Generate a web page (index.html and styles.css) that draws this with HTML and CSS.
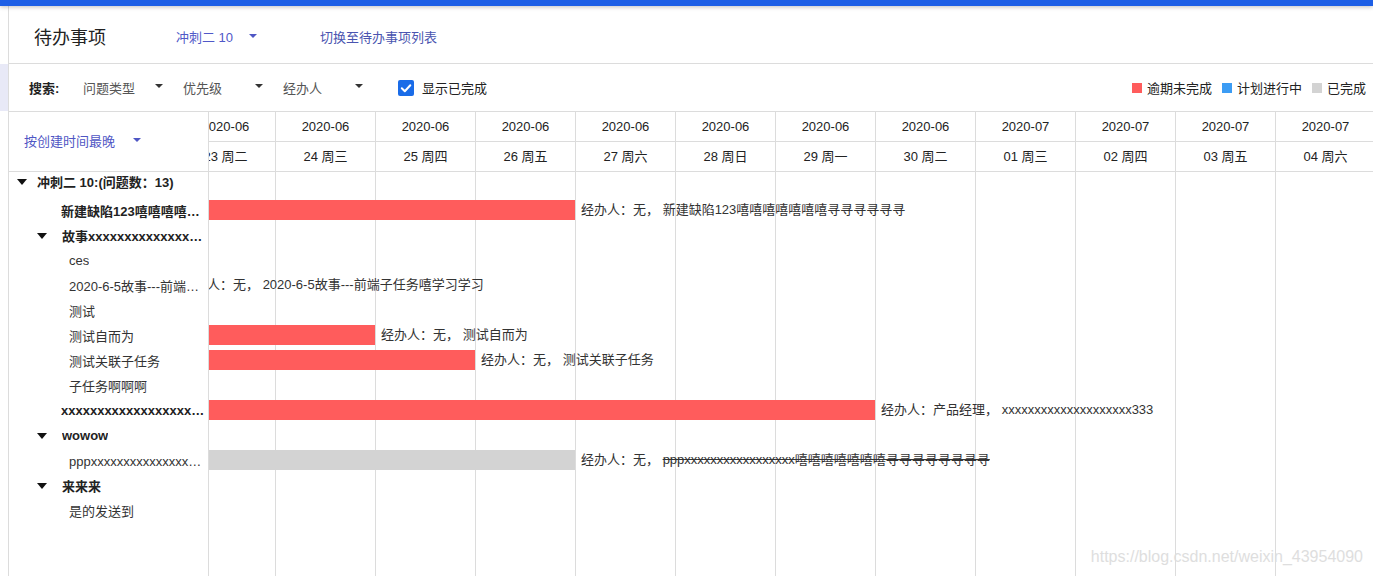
FILE: index.html
```html
<!DOCTYPE html>
<html lang="zh-CN">
<head>
<meta charset="utf-8">
<title>待办事项</title>
<link rel="stylesheet" href="styles.css">
</head>
<body>
<div class="topbar"></div>
<div class="page">
  <aside class="rail"><div class="rail-top"></div><div class="rail-mid"></div></aside>
  <main class="main">
    <header class="head">
      <h1 class="title">待办事项</h1>
      <div class="sprint"><span>冲刺二 10</span><span class="caret caret-blue"></span></div>
      <a class="switch">切换至待办事项列表</a>
    </header>
    <div class="search">
      <span class="search-label">搜索:</span>
      <div class="filter"><span class="ftxt">问题类型</span><span class="caret"></span></div>
      <div class="filter"><span class="ftxt">优先级</span><span class="caret"></span></div>
      <div class="filter"><span class="ftxt">经办人</span><span class="caret"></span></div>
      <label class="check"><span class="box"><svg width="16" height="16" viewBox="0 0 16 16"><path d="M3.8 8.3 L6.8 11.2 L12.3 5.2" fill="none" stroke="#fff" stroke-width="2" stroke-linecap="round" stroke-linejoin="round"/></svg></span>显示已完成</label>
      <div class="legend">
        <i class="sw red"></i><span>逾期未完成</span>
        <i class="sw blue"></i><span>计划进行中</span>
        <i class="sw gray"></i><span>已完成</span>
      </div>
    </div>
    <div class="gantt">
      <div class="tree">
        <div class="tree-head"><span>按创建时间最晚</span><span class="caret caret-blue sortcaret"></span></div>
        <div class="trow g lv0"><span class="tcaret"></span><span class="name b">冲刺二 10:(问题数：13)</span></div>
        <div class="trow lv1 leaf"><span class="name b">新建缺陷123嘻嘻嘻嘻嘻嘻嘻寻寻寻寻寻寻</span></div>
        <div class="trow lv1"><span class="tcaret"></span><span class="name b">故事xxxxxxxxxxxxxxxxxxxxxxxxxxxx</span></div>
        <div class="trow lv2"><span class="name">ces</span></div>
        <div class="trow lv2"><span class="name">2020-6-5故事---前端子任务嘻学习学习</span></div>
        <div class="trow lv2"><span class="name">测试</span></div>
        <div class="trow lv2"><span class="name">测试自而为</span></div>
        <div class="trow lv2"><span class="name">测试关联子任务</span></div>
        <div class="trow lv2"><span class="name">子任务啊啊啊</span></div>
        <div class="trow lv1 leaf"><span class="name b">xxxxxxxxxxxxxxxxxxxx333</span></div>
        <div class="trow lv1"><span class="tcaret"></span><span class="name b">wowow</span></div>
        <div class="trow lv2"><span class="name">pppxxxxxxxxxxxxxxxxx嘻嘻嘻嘻嘻嘻嘻寻寻寻寻寻寻寻寻</span></div>
        <div class="trow lv1"><span class="tcaret"></span><span class="name b">来来来</span></div>
        <div class="trow lv2"><span class="name">是的发送到</span></div>
      </div>
      <div class="chart">
        <div class="chart-inner">
          <div class="hrow">
            <div class="hcell">2020-06</div><div class="hcell">2020-06</div><div class="hcell">2020-06</div><div class="hcell">2020-06</div>
            <div class="hcell">2020-06</div><div class="hcell">2020-06</div><div class="hcell">2020-06</div><div class="hcell">2020-06</div>
            <div class="hcell">2020-07</div><div class="hcell">2020-07</div><div class="hcell">2020-07</div><div class="hcell">2020-07</div>
          </div>
          <div class="hrow">
            <div class="hcell">23 周二</div><div class="hcell">24 周三</div><div class="hcell">25 周四</div><div class="hcell">26 周五</div>
            <div class="hcell">27 周六</div><div class="hcell">28 周日</div><div class="hcell">29 周一</div><div class="hcell">30 周二</div>
            <div class="hcell">01 周三</div><div class="hcell">02 周四</div><div class="hcell">03 周五</div><div class="hcell">04 周六</div>
          </div>
          <div class="cbody">
            <div class="crow g"></div>
            <div class="crow"><div class="bar red" style="width:400px"></div><span class="lbl">经办人：无， <span>新建缺陷123嘻嘻嘻嘻嘻嘻嘻寻寻寻寻寻寻</span></span></div>
            <div class="crow"></div>
            <div class="crow"></div>
            <div class="crow"><div class="bar red" style="width:0px"></div><span class="lbl">经办人：无， <span>2020-6-5故事---前端子任务嘻学习学习</span></span></div>
            <div class="crow"></div>
            <div class="crow"><div class="bar red" style="width:200px"></div><span class="lbl">经办人：无， <span>测试自而为</span></span></div>
            <div class="crow"><div class="bar red" style="width:300px"></div><span class="lbl">经办人：无， <span>测试关联子任务</span></span></div>
            <div class="crow"></div>
            <div class="crow"><div class="bar red" style="width:700px"></div><span class="lbl">经办人：产品经理， <span>xxxxxxxxxxxxxxxxxxxx333</span></span></div>
            <div class="crow"></div>
            <div class="crow"><div class="bar gray" style="width:400px"></div><span class="lbl">经办人：无， <span class="done">pppxxxxxxxxxxxxxxxxx嘻嘻嘻嘻嘻嘻嘻寻寻寻寻寻寻寻寻</span></span></div>
            <div class="crow"></div>
            <div class="crow"></div>
          </div>
        </div>
      </div>
    </div>
  </main>
</div>
<div class="wm">https://blog.csdn.net/weixin_43954090</div>
</body>
</html>
```

FILE: styles.css
```css
* { box-sizing: border-box; margin: 0; padding: 0; }
html, body { height: 100%; }
body {
  font-family: "Liberation Sans", "Noto Sans CJK SC", sans-serif;
  font-size: 13px;
  color: #333;
  background: #fff;
  overflow: hidden;
  display: flex;
  flex-direction: column;
}
.topbar {
  height: 6px;
  flex: none;
  background: #1d5fe6;
  box-shadow: 0 1px 4px rgba(0, 0, 0, 0.25);
  position: relative;
  z-index: 2;
}
.page { flex: 1; display: flex; min-height: 0; }
.rail { width: 8px; flex: none; display: flex; flex-direction: column; }
.rail-top { height: 58px; }
.rail-mid { height: 47px; background: #e8e9f7; }
.main {
  flex: 1;
  min-width: 0;
  display: flex;
  flex-direction: column;
  border-left: 1px solid #dcdcdc;
}

/* header */
.head {
  height: 58px;
  flex: none;
  border-bottom: 1px solid #dcdcdc;
  display: flex;
  align-items: center;
  padding: 3px 0 0 25px;
}
.title { font-size: 18px; font-weight: normal; color: #222; width: 142px; }
.sprint { width: 144px; display: flex; align-items: center; color: #5058c8; }
.sprint .caret { margin-left: 16px; }
.switch { color: #4a54b0; }

.caret {
  width: 0; height: 0; flex: none;
  border-left: 4px solid transparent;
  border-right: 4px solid transparent;
  border-top: 4px solid #333;
}
.caret-blue { border-top-color: #4f56c4; }

/* search bar */
.search {
  height: 48px;
  flex: none;
  border-bottom: 1px solid #dcdcdc;
  display: flex;
  align-items: center;
  padding: 0 7px 0 20px;
}
.search-label { width: 54px; font-weight: bold; color: #222; }
.filter { width: 100px; display: flex; align-items: center; color: #555; }
.ftxt { width: 72px; }
.filter .caret { margin-top: -3px; }
.check { display: flex; align-items: center; margin-left: 15px; color: #222; }
.box {
  width: 16px; height: 16px;
  border-radius: 2px;
  background: #1a6ce8;
  margin-right: 8px;
  display: flex;
}
.legend { margin-left: auto; display: flex; align-items: center; color: #222; }
.sw { width: 10px; height: 10px; margin: 0 5px 0 10px; display: block; }
.sw.red { background: #ff5c5c; }
.sw.blue { background: #3c9cf4; }
.sw.gray { background: #d3d3d3; }

/* gantt */
.gantt { flex: 1; display: flex; min-height: 0; }
.tree { width: 200px; flex: none; border-right: 1px solid #dcdcdc; }
.tree-head {
  height: 60px;
  border-bottom: 1px solid #dcdcdc;
  display: flex;
  align-items: center;
  padding: 0 0 3px 15px;
  color: #4f56c4;
}
.sortcaret { margin-left: 18px; }
.trow {
  height: 25px;
  display: flex;
  align-items: center;
  white-space: nowrap;
  color: #333;
  padding-right: 2px;
}
.trow.g { height: 26px; padding-bottom: 7px; }
.lv0 { padding-left: 8px; }
.lv0 .tcaret { margin-right: 10px; }
.lv1 { padding-left: 28px; }
.lv1 .tcaret { margin-right: 15px; }
.lv1.leaf { padding-left: 52px; }
.lv2 { padding-left: 60px; }
.name { overflow: hidden; text-overflow: ellipsis; min-width: 0; }
.b { font-weight: bold; color: #222; }
.tcaret {
  width: 0; height: 0; flex: none;
  border-left: 5px solid transparent;
  border-right: 5px solid transparent;
  border-top: 6px solid #111;
}

.chart { flex: 1; min-width: 0; overflow: hidden; display: flex; flex-direction: column; }
.chart-inner { width: 1200px; margin-left: -34px; flex: 1; display: flex; flex-direction: column; }
.hrow { display: flex; height: 30px; flex: none; border-bottom: 1px solid #dcdcdc; }
.hcell {
  width: 100px; flex: none;
  border-left: 1px solid #dcdcdc;
  text-align: center;
  line-height: 30px;
  color: #222;
}
.cbody {
  flex: 1;
  background-image: linear-gradient(to right, #dcdcdc 1px, transparent 1px);
  background-size: 100px 100%;
}
.crow { height: 25px; display: flex; align-items: flex-start; }
.crow.g { height: 26px; }
.bar { height: 20px; margin-top: 2px; flex: none; }
.bar.red { background: #ff5c5c; }
.bar.gray { background: #d3d3d3; }
.lbl { margin-left: 6px; line-height: 24px; white-space: nowrap; color: #333; }
.done { text-decoration: line-through; }

.wm {
  position: absolute;
  right: 10px;
  bottom: 10px;
  font-family: "Liberation Sans", sans-serif;
  font-size: 16px;
  color: #dedede;
}
```
